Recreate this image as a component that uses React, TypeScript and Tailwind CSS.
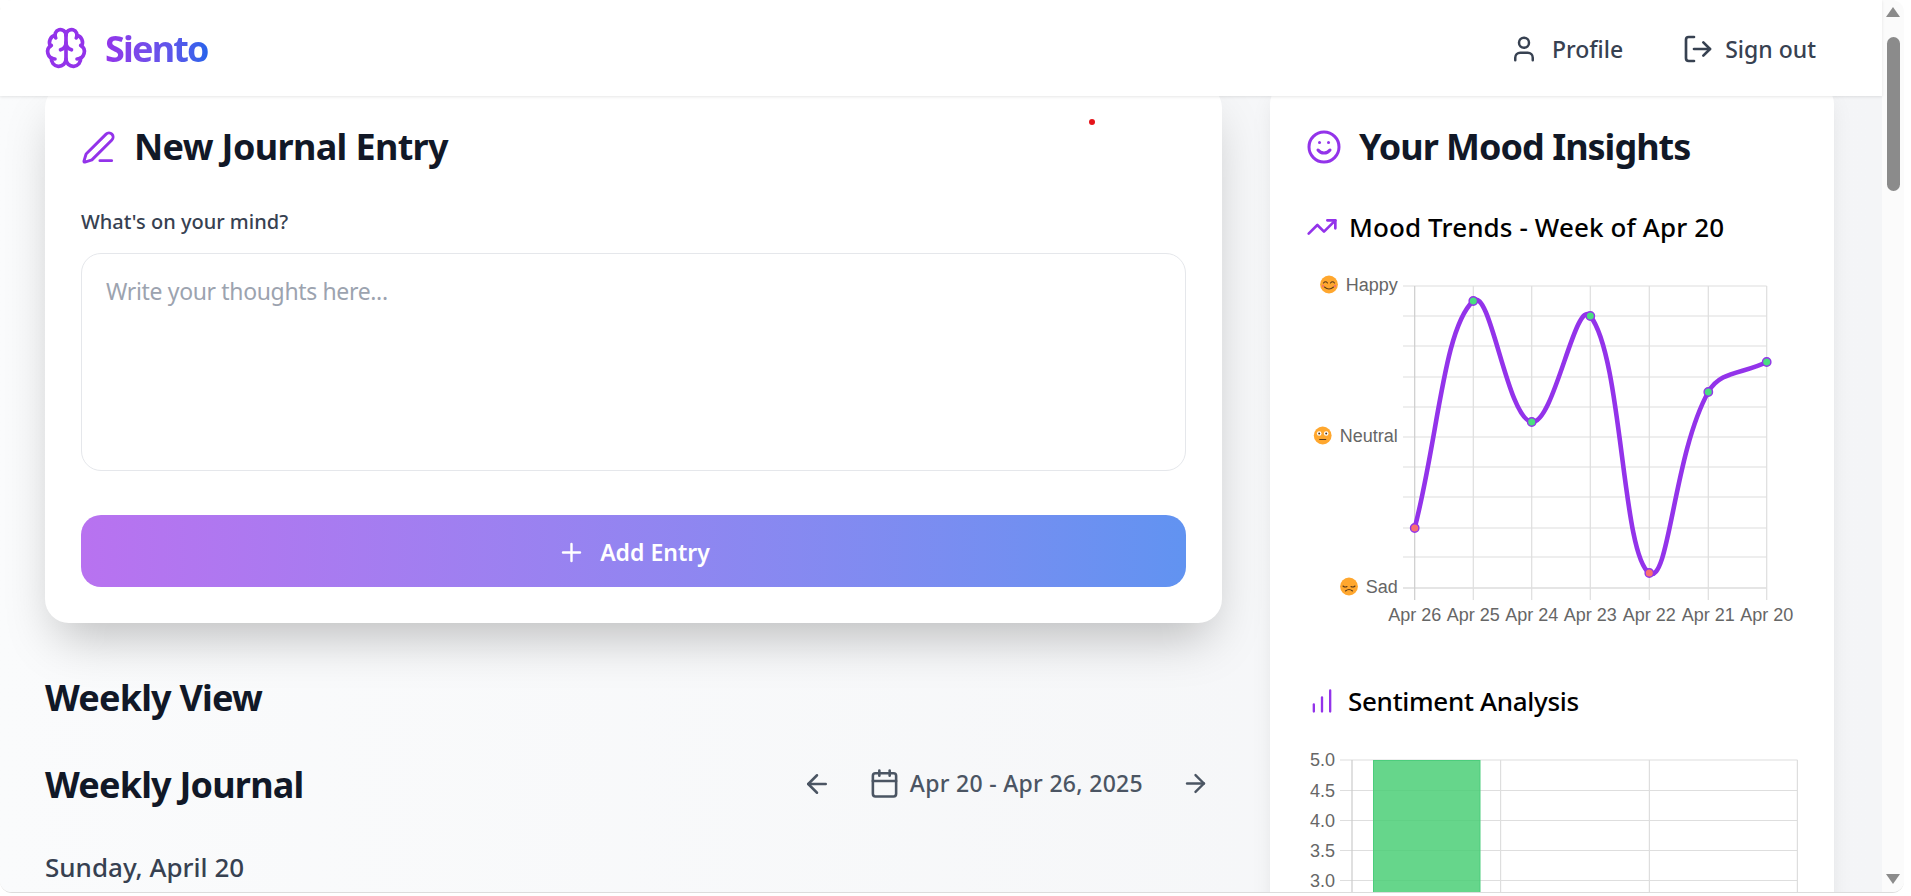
import { Brain, PenLine, Plus, User, LogOut, ArrowLeft, ArrowRight, Calendar, Smile, TrendingUp, ChartNoAxesColumnIncreasing } from "lucide-react";

const ff = "font-['Noto_Sans','Segoe_UI',sans-serif]";
const GRID = "#dedede";
const AXIS = "#cccccc";
const TICK = "#666666";
const AF = "'Liberation Sans', Arial, sans-serif";

const xs = [1414.7, 1473.3, 1531.7, 1590.3, 1649.3, 1708.3, 1766.7];
const pts = [528, 301, 422, 316, 573, 392, 362].map((y, i) => ({ x: xs[i], y }));
const labels = ["Apr 26", "Apr 25", "Apr 24", "Apr 23", "Apr 22", "Apr 21", "Apr 20"];
const hLines = [286, 316, 346, 377, 407, 437, 467, 497, 528, 557, 588];

function curve() {
  const t = 0.4;
  const cp = pts.map((p, i) => {
    const a = pts[i - 1] ?? p;
    const b = pts[i + 1] ?? p;
    const d01 = Math.hypot(p.x - a.x, p.y - a.y);
    const d12 = Math.hypot(b.x - p.x, b.y - p.y);
    const s = d01 + d12 || 1;
    const fa = (t * d01) / s;
    const fb = (t * d12) / s;
    return {
      px: p.x - fa * (b.x - a.x),
      py: p.y - fa * (b.y - a.y),
      nx: p.x + fb * (b.x - a.x),
      ny: p.y + fb * (b.y - a.y),
    };
  });
  let d = `M${pts[0].x} ${pts[0].y}`;
  for (let i = 1; i < pts.length; i++) {
    d += ` C${cp[i - 1].nx} ${cp[i - 1].ny} ${cp[i].px} ${cp[i].py} ${pts[i].x} ${pts[i].y}`;
  }
  return d;
}

function Face({ cx, cy, kind }: { cx: number; cy: number; kind: "happy" | "neutral" | "sad" }) {
  return (
    <g>
      <circle cx={cx} cy={cy} r={8.9} fill="#ffa72e" />
      {kind === "happy" && (
        <g fill="none" stroke="#5a3a1a" strokeWidth={1.1} strokeLinecap="round">
          <path d={`M${cx - 5.5} ${cy - 1.5}q2 -2.5 4 0`} />
          <path d={`M${cx + 1.5} ${cy - 1.5}q2 -2.5 4 0`} />
          <path d={`M${cx - 4.5} ${cy + 2.5}q4.5 4 9 0`} />
          <circle cx={cx - 6} cy={cy + 1.5} r={1.2} fill="#f4736a" stroke="none" />
          <circle cx={cx + 6} cy={cy + 1.5} r={1.2} fill="#f4736a" stroke="none" />
        </g>
      )}
      {kind === "neutral" && (
        <g>
          <circle cx={cx - 3.5} cy={cy - 2} r={2.3} fill="#fff" />
          <circle cx={cx + 3.5} cy={cy - 2} r={2.3} fill="#fff" />
          <circle cx={cx - 3.5} cy={cy - 2} r={1} fill="#4a3320" />
          <circle cx={cx + 3.5} cy={cy - 2} r={1} fill="#4a3320" />
          <path d={`M${cx - 3} ${cy + 4}h6`} stroke="#5a3a1a" strokeWidth={1.1} strokeLinecap="round" />
        </g>
      )}
      {kind === "sad" && (
        <g fill="none" stroke="#5a3a1a" strokeWidth={1.1} strokeLinecap="round">
          <path d={`M${cx - 6} ${cy - 0.5}q2 1.8 4 0.5`} />
          <path d={`M${cx + 2} ${cy}q2 1.3 4 -0.5`} />
          <path d={`M${cx - 3.5} ${cy + 4.5}q3.5 -3 7 0`} />
        </g>
      )}
    </g>
  );
}

function MoodChart() {
  return (
    <svg width={564} height={360} viewBox="1270 270 564 360" className="block mt-[25px] -ml-[37px]">
      {hLines.map((y, i) => (
        <line key={y} x1={1403} x2={1766.7} y1={y} y2={y} stroke={i === hLines.length - 1 ? AXIS : GRID} strokeWidth={1.2} />
      ))}
      {xs.map((x, i) => (
        <line key={x} x1={x} x2={x} y1={286} y2={600} stroke={i === 0 ? AXIS : GRID} strokeWidth={1.2} />
      ))}
      <path d={curve()} fill="none" stroke="#9333ea" strokeWidth={4.6} />
      {pts.map((p, i) => (
        <circle key={i} cx={p.x} cy={p.y} r={4.2} fill={i === 0 || i === 4 ? "#f87171" : "#4ade80"} stroke="#9333ea" strokeWidth={1.4} />
      ))}
      {labels.map((l, i) => (
        <text key={l} x={xs[i]} y={621} textAnchor="middle" fontSize={18} fill={TICK} fontFamily={AF}>{l}</text>
      ))}
      <Face cx={1329} cy={284.5} kind="happy" />
      <text x={1397.7} y={291} textAnchor="end" fontSize={18} fill={TICK} fontFamily={AF}>Happy</text>
      <Face cx={1322.7} cy={435.5} kind="neutral" />
      <text x={1397.7} y={442} textAnchor="end" fontSize={18} fill={TICK} fontFamily={AF}>Neutral</text>
      <Face cx={1349} cy={586.5} kind="sad" />
      <text x={1397.7} y={593} textAnchor="end" fontSize={18} fill={TICK} fontFamily={AF}>Sad</text>
    </svg>
  );
}

function BarChart() {
  const ys = [[760, "5.0"], [790.5, "4.5"], [820.5, "4.0"], [850.5, "3.5"], [880.5, "3.0"]] as const;
  return (
    <svg width={564} height={142} viewBox="1270 750 564 142" className="block mt-[31px] -ml-[37px]">
      {ys.map(([y, l]) => (
        <g key={l}>
          <line x1={1340} x2={1797.5} y1={y} y2={y} stroke={GRID} strokeWidth={1.2} />
          <text x={1335} y={y + 6} textAnchor="end" fontSize={18} fill={TICK} fontFamily={AF}>{l}</text>
        </g>
      ))}
      <line x1={1352} x2={1352} y1={760} y2={892} stroke={AXIS} strokeWidth={1.2} />
      {[1500.6, 1649.4, 1797.4].map((x) => (
        <line key={x} x1={x} x2={x} y1={760} y2={892} stroke={GRID} strokeWidth={1.2} />
      ))}
      <rect x={1373.5} y={760.5} width={106.5} height={140} fill="#4bcf77" fillOpacity={0.85} stroke="#4ccd7c" strokeWidth={1} />
    </svg>
  );
}

export default function App() {
  return (
    <div className={`${ff} w-[1911px] h-[896px] bg-white overflow-hidden`}>
      <div className="relative flex w-[1904px] h-[893px] rounded-[12px] overflow-hidden border-b border-[#dcdcdc]">
        <div className="w-[1882px] h-full flex flex-col">
          <header className="relative z-10 h-24 shrink-0 bg-white shadow-[0_1px_3px_rgba(0,0,0,0.1)] flex items-center justify-between pl-[44px] pr-[66px]">
            <div className="flex items-center gap-[17px]">
              <Brain className="w-[44px] h-[44px] text-[#9333ea]" strokeWidth={2} />
              <span className="mt-[2px] text-[36px] font-bold leading-none tracking-[-1.8px] bg-gradient-to-r from-[#9333ea] to-[#2563eb] bg-clip-text text-transparent">Siento</span>
            </div>
            <nav className="mt-[2px] flex items-center text-[#374151] text-[23px] font-medium">
              <div className="flex items-center gap-[13px]">
                <User className="w-[30px] h-[30px]" strokeWidth={2} />
                <span>Profile</span>
              </div>
              <div className="flex items-center gap-[11px] ml-[59px]">
                <LogOut className="w-[32px] h-[32px]" strokeWidth={2} />
                <span>Sign out</span>
              </div>
            </nav>
          </header>
          <main className="relative flex-1 min-h-0 overflow-hidden bg-gradient-to-r from-[#fafbfc] to-[#f4f5f7] flex items-start gap-[48px] pl-[45px] -mt-[12px]">
            <div className="w-[1177px] shrink-0">
              <section className="bg-white rounded-[24px] shadow-[0_25px_50px_-12px_rgba(0,0,0,0.25)] px-[36px] pt-[39px] pb-[36px]">
                <div className="flex items-center h-[48px] gap-[18px]">
                  <PenLine className="w-[35px] h-[35px] text-[#9333ea]" strokeWidth={2} />
                  <h2 className="text-[36px] font-bold text-[#111827] leading-[48px] tracking-[-0.65px]">New Journal Entry</h2>
                </div>
                <label className="block mt-[37px] text-[20px] leading-[28px] font-medium text-[#374151]">What's on your mind?</label>
                <textarea readOnly placeholder="Write your thoughts here..." className="block w-full h-[218px] mt-[17px] rounded-[20px] border border-[#e5e7eb] resize-none outline-none px-[24px] py-[20px] text-[23px] leading-[34px] tracking-[-0.35px] placeholder:text-[#9ca3af]" />
                <button className="flex items-center justify-center w-full h-[72px] mt-[44px] pt-[2px] rounded-[20px] bg-gradient-to-r from-[#b872f0] to-[#6193f1] text-white text-[23px] font-semibold gap-[14px]">
                  <Plus className="w-[29px] h-[29px]" strokeWidth={2} />
                  <span>Add Entry</span>
                </button>
              </section>
              <h2 className="mt-[51px] text-[36px] leading-[48px] font-bold text-[#111827] tracking-[-0.8px]">Weekly View</h2>
              <div className="mt-[39px] h-[48px] flex items-center justify-between">
                <h2 className="text-[36px] leading-[48px] font-bold text-[#111827] tracking-[-0.8px]">Weekly Journal</h2>
                <div className="-mt-[3px] flex items-center text-[#4b5563] pr-[12px]">
                  <ArrowLeft className="w-[30px] h-[30px]" strokeWidth={2} />
                  <Calendar className="w-[31px] h-[31px] ml-[37px]" strokeWidth={2} />
                  <span className="ml-[10px] text-[23px] font-medium tracking-[0.3px]">Apr 20 - Apr 26, 2025</span>
                  <ArrowRight className="w-[29px] h-[29px] ml-[38px]" strokeWidth={2} />
                </div>
              </div>
              <h3 className="mt-[40px] text-[26px] leading-[36px] font-medium text-[#374151]">Sunday, April 20</h3>
            </div>
            <aside className="w-[564px] shrink-0 bg-white rounded-[20px] shadow-[0_10px_25px_-5px_rgba(0,0,0,0.1),0_8px_10px_-6px_rgba(0,0,0,0.06)] pl-[37px] pt-[39px] h-[900px]">
              <div className="flex items-center h-[48px] gap-[17px] -ml-[1px]">
                <Smile className="w-[36px] h-[36px] text-[#9333ea]" strokeWidth={2} />
                <h2 className="text-[36px] font-bold text-[#111827] leading-[48px] tracking-[-1px]">Your Mood Insights</h2>
              </div>
              <div className="flex items-center h-[36px] mt-[38px] gap-[11px] -ml-[1px]">
                <TrendingUp className="w-[32px] h-[32px] text-[#9333ea]" strokeWidth={2} />
                <h3 className="text-[26px] font-medium text-black leading-[36px] tracking-[0.12px]">Mood Trends - Week of Apr 20</h3>
              </div>
              <MoodChart />
              <div className="flex items-center h-[36px] mt-[53px] gap-[12px] ml-[1px]">
                <ChartNoAxesColumnIncreasing className="w-[28px] h-[28px] text-[#9333ea]" strokeWidth={2} />
                <h3 className="text-[26px] font-medium text-black leading-[36px] tracking-[-0.3px]">Sentiment Analysis</h3>
              </div>
              <BarChart />
            </aside>
            <span className="absolute left-[1089px] top-[35px] w-[6px] h-[6px] rounded-full bg-[#e5141a]" />
          </main>
        </div>
        <div className="w-[22px] h-full bg-[#fbfbfb] flex flex-col items-center">
          <div className="mt-[7px] w-0 h-0 border-x-[7px] border-x-transparent border-b-[10px] border-b-[#8b8b8b]" />
          <div className="mt-[20px] w-[13px] h-[154px] rounded-full bg-[#8b8b8b]" />
          <div className="mt-auto mb-[8px] w-0 h-0 border-x-[7px] border-x-transparent border-t-[10px] border-t-[#8b8b8b]" />
        </div>
      </div>
    </div>
  );
}
